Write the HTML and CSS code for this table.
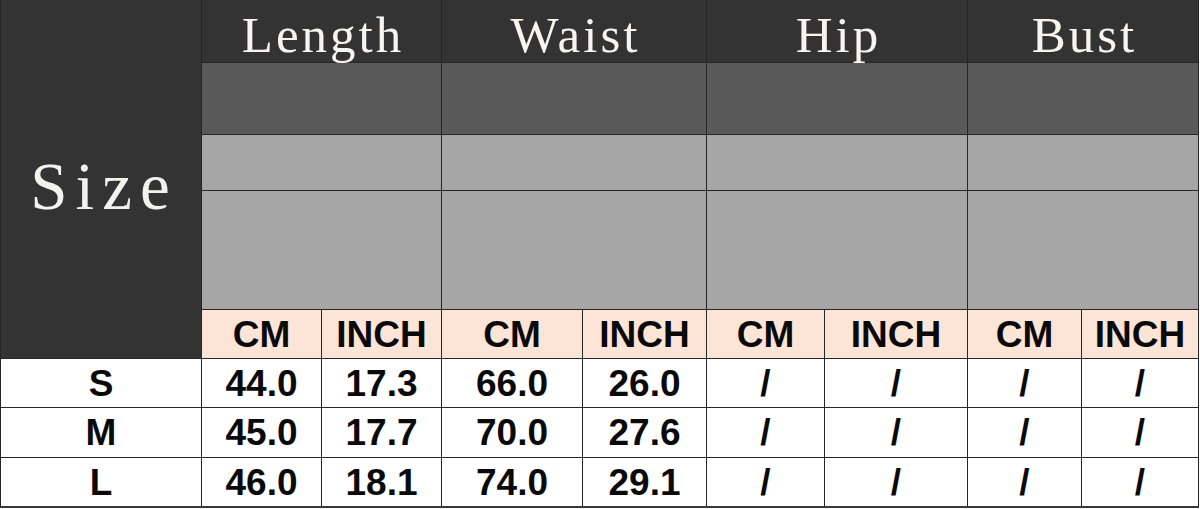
FILE: index.html
```html
<!DOCTYPE html>
<html>
<head>
<meta charset="utf-8">
<link rel="stylesheet" href="styles.css">
</head>
<body>
<div class="chart">
  <div class="size-head">Size</div>
  <div class="grp-head">Length</div>
  <div class="grp-head">Waist</div>
  <div class="grp-head">Hip</div>
  <div class="grp-head">Bust</div>

  <div class="band band1"></div><div class="band band1"></div><div class="band band1"></div><div class="band band1"></div>
  <div class="band band2"></div><div class="band band2"></div><div class="band band2"></div><div class="band band2"></div>
  <div class="band band3"></div><div class="band band3"></div><div class="band band3"></div><div class="band band3"></div>

  <div class="unit">CM</div><div class="unit">INCH</div>
  <div class="unit">CM</div><div class="unit">INCH</div>
  <div class="unit">CM</div><div class="unit">INCH</div>
  <div class="unit">CM</div><div class="unit">INCH</div>

  <div class="cell">S</div><div class="cell">44.0</div><div class="cell">17.3</div><div class="cell">66.0</div><div class="cell">26.0</div><div class="cell">/</div><div class="cell">/</div><div class="cell">/</div><div class="cell">/</div>
  <div class="cell">M</div><div class="cell">45.0</div><div class="cell">17.7</div><div class="cell">70.0</div><div class="cell">27.6</div><div class="cell">/</div><div class="cell">/</div><div class="cell">/</div><div class="cell">/</div>
  <div class="cell">L</div><div class="cell">46.0</div><div class="cell">18.1</div><div class="cell">74.0</div><div class="cell">29.1</div><div class="cell">/</div><div class="cell">/</div><div class="cell">/</div><div class="cell">/</div>
</div>
</body>
</html>
```
FILE: styles.css
```css
html, body {
  margin: 0;
  padding: 0;
  background: #ffffff;
}

.chart {
  display: grid;
  width: 1197px;
  grid-template-columns: 200px 119px 119px 140px 123px 117px 142px 113px 116px;
  grid-template-rows: 62px 71px 55px 118px 48px 48px 49px 48px;
  gap: 1px;
  background: #262626;
  border-left: 1px solid #262626;
  border-right: 1px solid #262626;
  border-bottom: 2px solid #3a3a3a;
}

.size-head {
  grid-row: 1 / 6;
  grid-column: 1;
  background: #333333;
  color: #f2f2ee;
  font-family: "Liberation Serif", "Times New Roman", serif;
  font-size: 67px;
  letter-spacing: 8px;
  display: flex;
  align-items: center;
  justify-content: center;
  padding: 14px 0 0 6px;
  box-sizing: border-box;
}

.grp-head {
  grid-column: span 2;
  background: #333333;
  color: #f7f5ef;
  font-family: "Liberation Serif", "Times New Roman", serif;
  font-size: 51px;
  letter-spacing: 3px;
  display: flex;
  align-items: center;
  justify-content: center;
  padding: 8px 0 0 3px;
  box-sizing: border-box;
  line-height: 1;
}

.band {
  grid-column: span 2;
}

.band1 {
  background: #595959;
}

.band2,
.band3 {
  background: #a6a6a6;
}

.unit,
.cell {
  display: flex;
  align-items: center;
  justify-content: center;
  font-family: "Liberation Sans", Arial, sans-serif;
  font-weight: bold;
  font-size: 37px;
  color: #0a0a0a;
  line-height: 1;
}

.unit {
  background: #fce4d6;
}

.cell {
  background: #ffffff;
}
```
